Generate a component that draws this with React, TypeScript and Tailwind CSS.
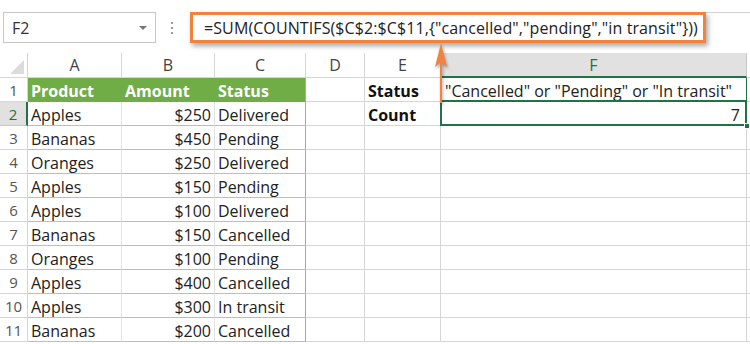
import type { ReactNode } from 'react'

const ROWS = [
  ['Apples', '$250', 'Delivered'],
  ['Bananas', '$450', 'Pending'],
  ['Oranges', '$250', 'Delivered'],
  ['Apples', '$150', 'Pending'],
  ['Apples', '$100', 'Delivered'],
  ['Bananas', '$150', 'Cancelled'],
  ['Oranges', '$100', 'Pending'],
  ['Apples', '$400', 'Cancelled'],
  ['Apples', '$300', 'In transit'],
  ['Bananas', '$200', 'Cancelled'],
]

const COLS = ['A', 'B', 'C', 'D', 'E', 'F']

function Cell({ className = '', children }: { className?: string; children?: ReactNode }) {
  return (
    <div className={`h-[24px] pt-[2px] border-b border-r border-[#d6d6d6] flex items-center overflow-hidden whitespace-nowrap ${className}`}>
      {children}
    </div>
  )
}

function RowHead({ n, active }: { n: number; active?: boolean }) {
  return (
    <div
      className={[
        'h-[24px] pt-[2px] border-b flex items-center justify-center text-[15px]',
        active
          ? 'bg-[#e1e1e1] text-[#217346] border-[#c6c6c6] border-r-2 border-r-[#217346]'
          : 'bg-white text-[#555] border-[#d6d6d6] border-r',
      ].join(' ')}
    >
      {n}
    </div>
  )
}

export default function App() {
  return (
    <div
      className="w-[750px] h-[344px] bg-white overflow-hidden relative text-[#222]"
      style={{ fontFamily: '"Open Sans", "Noto Sans", sans-serif' }}
    >
      {/* formula bar */}
      <div className="h-[53px] flex items-start pt-[12px]">
        <div className="ml-[3px] w-[153px] h-[31px] border border-[#c6c6c6] flex items-center pl-[8px] pr-[8px] text-[16px] text-[#333]">
          <span className="flex-1">F2</span>
          <span className="w-0 h-0 border-l-[4px] border-r-[4px] border-t-[4px] border-l-transparent border-r-transparent border-t-[#777]" />
        </div>
        <div className="ml-[15px] h-[31px] flex flex-col justify-center gap-[3px]">
          <span className="w-[2px] h-[2px] bg-[#9a9a9a]" />
          <span className="w-[2px] h-[2px] bg-[#9a9a9a]" />
          <span className="w-[2px] h-[2px] bg-[#9a9a9a]" />
        </div>
        <div className="ml-[17px] w-[516px] h-[31px] border-[3px] border-[#f0843f] shadow-[2px_3px_5px_rgba(0,0,0,0.35)] flex items-center pl-[11px] text-[16px] text-[#222] whitespace-nowrap tracking-[0.1px]">
          {'=SUM(COUNTIFS($C$2:$C$11,{"cancelled","pending","in transit"}))'}
        </div>
        <div className="flex-1 h-[31px] border-t border-[#d0d0d0]" />
      </div>

      {/* sheet */}
      <div className="grid grid-cols-[28px_94px_93px_91px_59px_76px_306px_3px] text-[16px]">
        {/* column headers */}
        <div className="h-[25px] border-r border-b border-[#d6d6d6] bg-white relative">
          <span className="absolute right-[3px] bottom-[3px] w-0 h-0 border-b-[14px] border-l-[14px] border-l-transparent border-b-[#dcdcdc]" />
        </div>
        {COLS.map(c =>
          c === 'F' ? (
            <div key={c} className="h-[25px] bg-[#e1e1e1] border-r border-[#c6c6c6] border-b-2 border-b-[#217346] flex items-center justify-center text-[#217346]">
              {c}
            </div>
          ) : (
            <div key={c} className="h-[25px] bg-white border-r border-b border-[#d6d6d6] flex items-center justify-center text-[#444]">
              {c}
            </div>
          ),
        )}
        <div className="h-[25px] border-b border-[#d6d6d6]" />

        {/* row 1 */}
        <RowHead n={1} />
        <Cell className="bg-[#70ad47] border-r-[#70ad47] border-b-[#70ad47] font-bold text-white px-[3px]">Product</Cell>
        <Cell className="bg-[#70ad47] border-r-[#70ad47] border-b-[#70ad47] font-bold text-white px-[3px]">Amount</Cell>
        <Cell className="bg-[#70ad47] border-r-[#8fc16b] border-b-[#70ad47] font-bold text-white px-[3px]">Status</Cell>
        <Cell />
        <Cell className="font-bold px-[3px] text-[#111]">Status</Cell>
        <Cell className="px-[4px] text-[#222] border-r-[#217346]">{'"Cancelled" or "Pending" or "In transit"'}</Cell>
        <div className="h-[24px] border-b border-[#d6d6d6]" />

        {ROWS.map((r, i) => {
          const n = i + 2
          return (
            <div key={n} className="contents">
              <RowHead n={n} active={n === 2} />
              <Cell className="border-b-[#a9d08e] border-r-[#e2e2e2] px-[3px]">{r[0]}</Cell>
              <Cell className="border-b-[#a9d08e] border-r-[#e2e2e2] px-[3px] justify-end">{r[1]}</Cell>
              <Cell className="border-b-[#a9d08e] border-r-[#8fc16b] px-[3px]">{r[2]}</Cell>
              <Cell />
              <Cell className="font-bold px-[3px] text-[#111]">{n === 2 ? 'Count' : ''}</Cell>
              {n === 2 ? (
                <div className="h-[24px] pt-[2px] relative flex items-center justify-end pr-[6px] border-b border-r border-[#d6d6d6]">
                  7
                  <span className="absolute -top-[2px] -left-[1px] -right-[1px] -bottom-[1px] border-2 border-[#217346]" />
                  <span className="absolute -right-[4px] -bottom-[4px] w-[6px] h-[6px] bg-[#217346] border border-white" />
                </div>
              ) : (
                <Cell />
              )}
              <div className="h-[24px] border-b border-[#d6d6d6]" />
            </div>
          )
        })}
      </div>

      {/* arrow */}
      <svg
        className="absolute left-[433px] top-[42px]"
        width="16"
        height="62"
        viewBox="0 0 16 62"
        style={{ filter: 'drop-shadow(1px 2px 1.5px rgba(0,0,0,0.35))' }}
      >
        <line x1="8" y1="14" x2="8" y2="61" stroke="#f0843f" strokeWidth="2" />
        <path d="M8 1 L14 25 L8 20 L2 25 Z" fill="#f0843f" />
      </svg>
    </div>
  )
}
